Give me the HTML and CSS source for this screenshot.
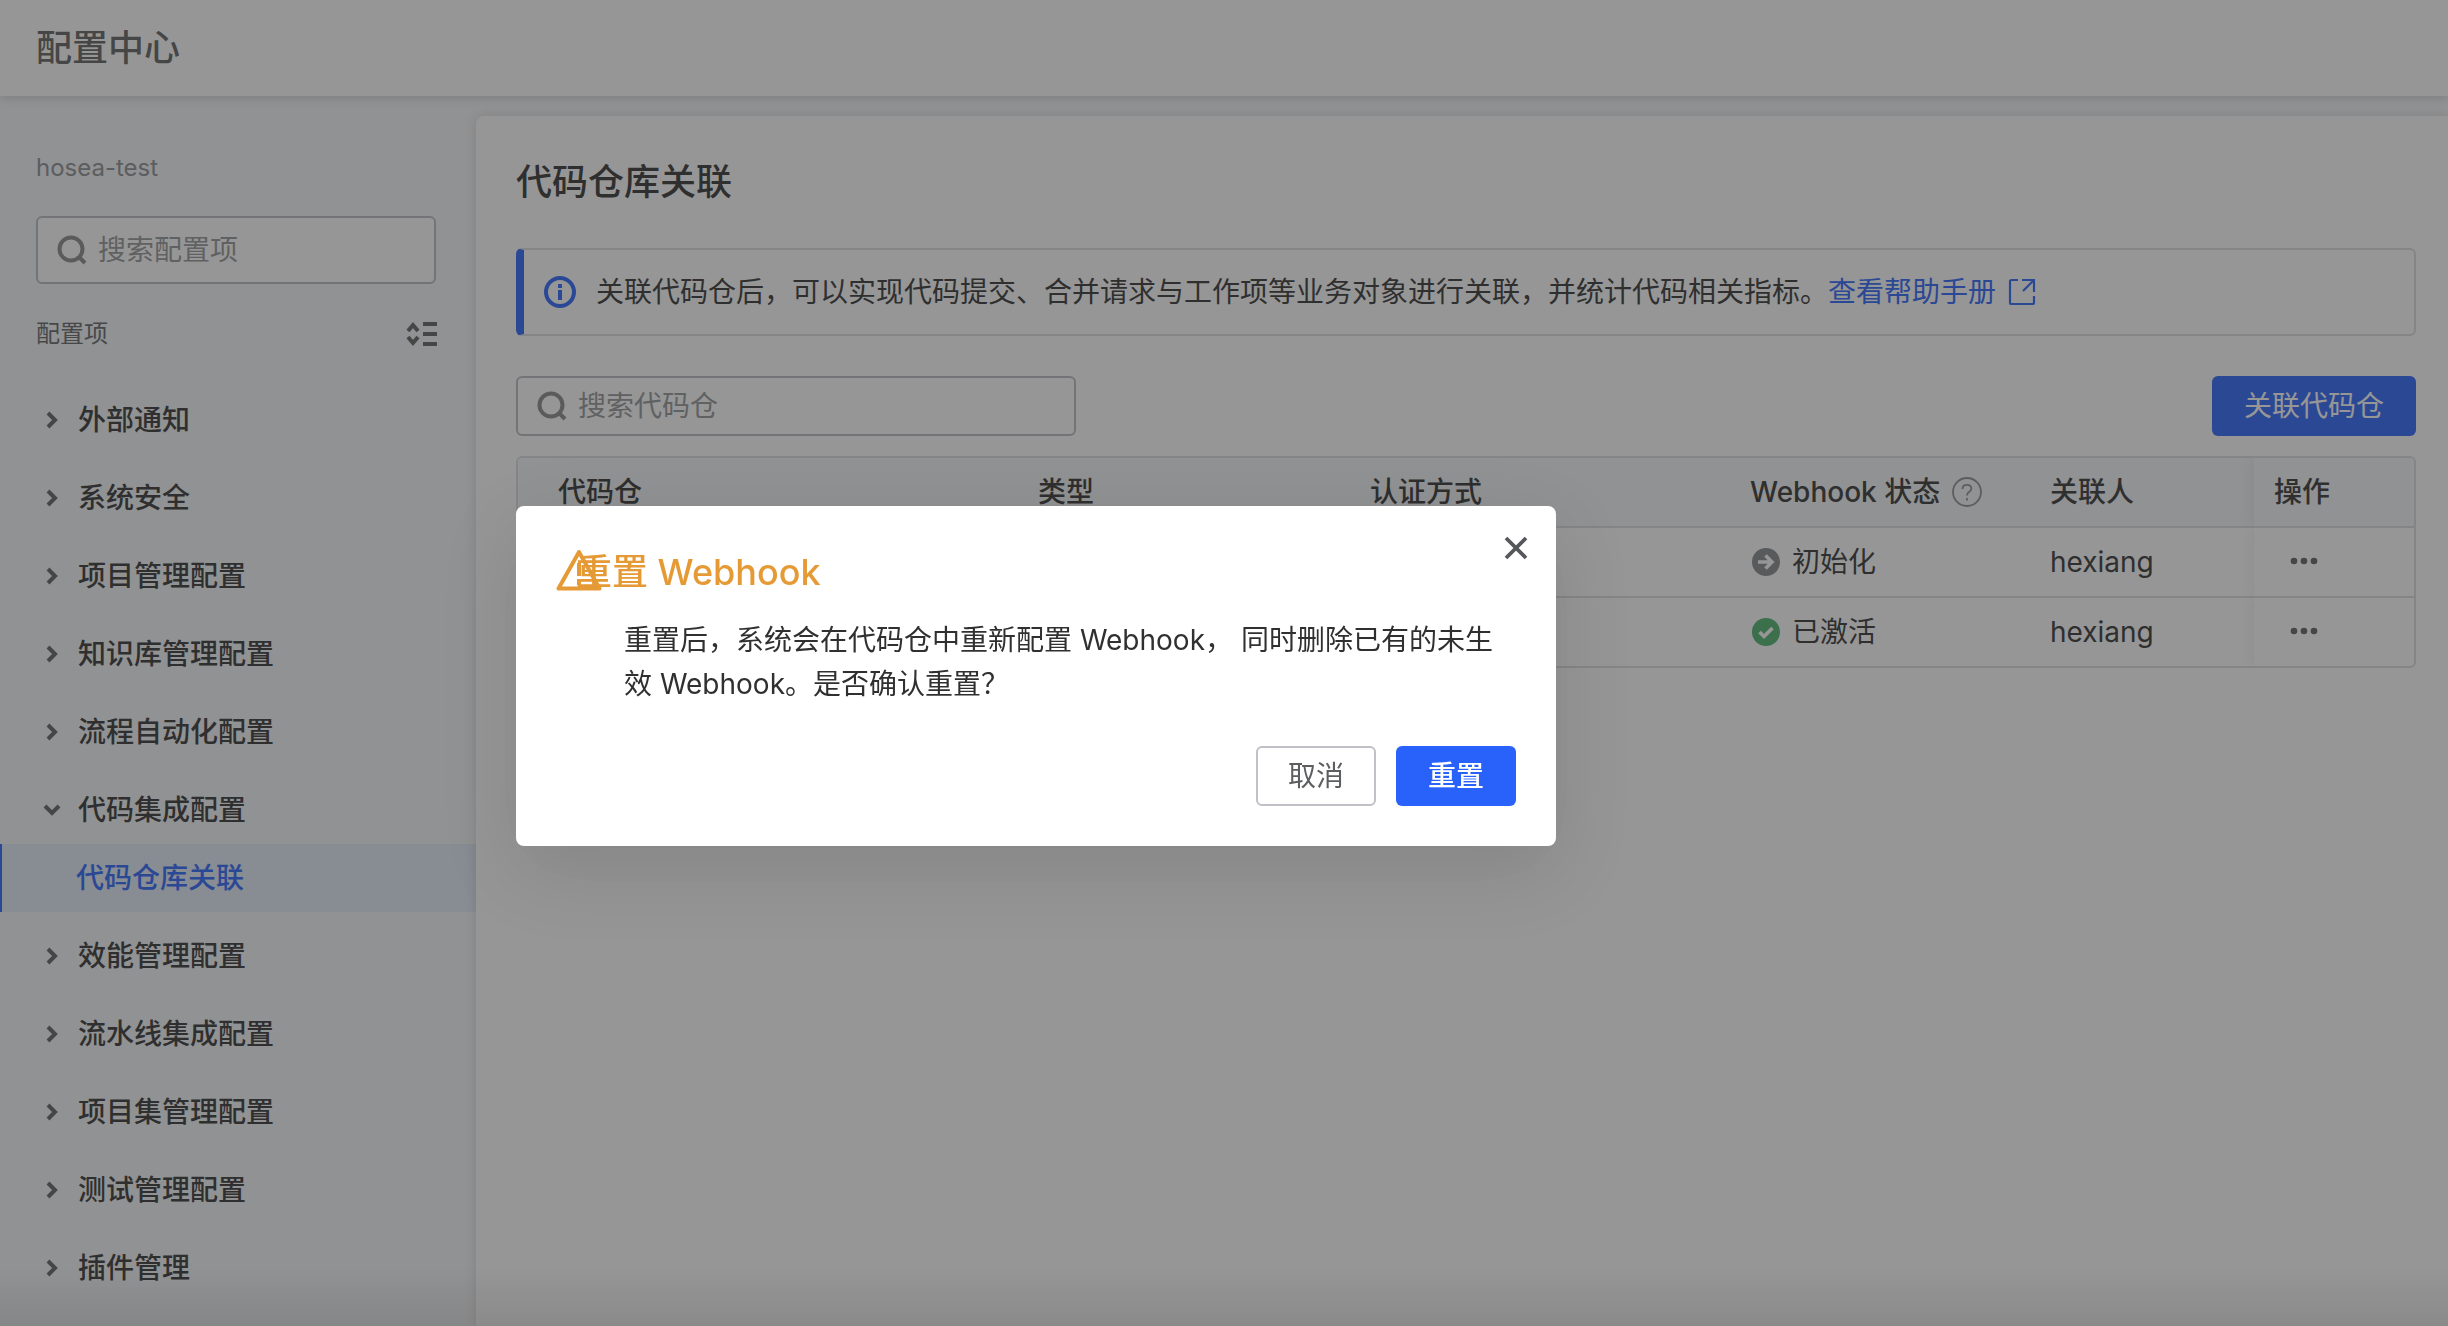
FILE: index.html
```html
<!DOCTYPE html>
<html lang="zh-CN">
<head>
<meta charset="utf-8">
<meta name="viewport" content="width=device-width, initial-scale=1">
<title>配置中心</title>
<link rel="stylesheet" href="styles.css">
</head>
<body>
<svg class="sprite" aria-hidden="true">
  <symbol id="chevron" viewBox="0 0 20 20"><path d="M6 3l7 7-7 7" fill="none" stroke="currentColor" stroke-width="4"/></symbol>
  <symbol id="search" viewBox="0 0 32 32"><circle cx="15" cy="15" r="11.500" fill="none" stroke="currentColor" stroke-width="4"/><path d="M23 23l6 6" stroke="currentColor" stroke-width="4"/></symbol>
  <symbol id="more" viewBox="0 0 28 8"><circle cx="4" cy="4" r="3.300" fill="currentColor"/><circle cx="14" cy="4" r="3.300" fill="currentColor"/><circle cx="24" cy="4" r="3.300" fill="currentColor"/></symbol>
</svg>
<div class="app">
  <header class="topbar"><h1 class="topbar-title">配置中心</h1></header>
  <div class="layout">
    <aside class="sidebar">
      <p class="project">hosea-test</p>
      <label class="search search-side">
        <svg class="search-icon" aria-hidden="true"><use href="#search"/></svg>
        <input class="search-input" type="text" placeholder="搜索配置项" aria-label="搜索配置项">
      </label>
      <div class="group-head">
        <span>配置项</span>
        <button class="icon-button" type="button" aria-label="展开收起">
          <svg class="fold-icon" viewBox="0 0 32 28" aria-hidden="true"><path d="M2 11l5-6 5 6M2 17l5 6 5-6" fill="none" stroke="currentColor" stroke-width="4"/><path d="M17 4h14M17 14h14M17 24h14" stroke="currentColor" stroke-width="4"/></svg>
        </button>
      </div>
      <nav class="menu">
        <a class="menu-item" href="#"><svg class="chevron"><use href="#chevron"/></svg>外部通知</a>
        <a class="menu-item" href="#"><svg class="chevron"><use href="#chevron"/></svg>系统安全</a>
        <a class="menu-item" href="#"><svg class="chevron"><use href="#chevron"/></svg>项目管理配置</a>
        <a class="menu-item" href="#"><svg class="chevron"><use href="#chevron"/></svg>知识库管理配置</a>
        <a class="menu-item" href="#"><svg class="chevron"><use href="#chevron"/></svg>流程自动化配置</a>
        <div class="menu-group">
          <a class="menu-item" href="#"><svg class="chevron chevron-open"><use href="#chevron"/></svg>代码集成配置</a>
          <a class="menu-sub" href="#" aria-current="page">代码仓库关联</a>
        </div>
        <a class="menu-item" href="#"><svg class="chevron"><use href="#chevron"/></svg>效能管理配置</a>
        <a class="menu-item" href="#"><svg class="chevron"><use href="#chevron"/></svg>流水线集成配置</a>
        <a class="menu-item" href="#"><svg class="chevron"><use href="#chevron"/></svg>项目集管理配置</a>
        <a class="menu-item" href="#"><svg class="chevron"><use href="#chevron"/></svg>测试管理配置</a>
        <a class="menu-item" href="#"><svg class="chevron"><use href="#chevron"/></svg>插件管理</a>
      </nav>
    </aside>
    <main class="panel">
      <h2 class="panel-title">代码仓库关联</h2>
      <div class="notice">
        <svg class="notice-icon" viewBox="0 0 32 32" aria-hidden="true"><circle cx="16" cy="16" r="14" fill="none" stroke="currentColor" stroke-width="4"/><path d="M16 8v4M16 14v10" stroke="currentColor" stroke-width="4"/></svg>
        <p class="notice-text">关联代码仓后，可以实现代码提交、合并请求与工作项等业务对象进行关联，并统计代码相关指标。<a class="link" href="#">查看帮助手册<svg class="link-icon" viewBox="0 0 28 28" aria-hidden="true"><path d="M10 2H3.500Q2 2 2 3.500V24.500Q2 26 3.500 26H24.500Q26 26 26 24.500V18M14 2H26V14M26 2L15 13" fill="none" stroke="currentColor" stroke-width="2.200"/></svg></a></p>
      </div>
      <div class="toolbar">
        <label class="search search-main">
          <svg class="search-icon" aria-hidden="true"><use href="#search"/></svg>
          <input class="search-input" type="text" placeholder="搜索代码仓" aria-label="搜索代码仓">
        </label>
        <button class="button button-primary" type="button">关联代码仓</button>
      </div>
      <div class="table-box">
        <table class="table">
          <colgroup><col class="col-repo"><col class="col-type"><col class="col-auth"><col class="col-hook"><col class="col-user"><col class="col-action"></colgroup>
          <thead>
            <tr>
              <th>代码仓</th><th>类型</th><th>认证方式</th>
              <th><span class="cell">Webhook 状态<svg class="help-icon" viewBox="0 0 30 30" aria-hidden="true"><circle cx="15" cy="15" r="14" fill="none" stroke="currentColor" stroke-width="1.800"/><path d="M10.500 12Q10.500 7.800 15 7.800Q19.300 7.800 19.300 11.500Q19.300 13.500 17 15Q15 16.300 15 18.500M15 21v2.600" fill="none" stroke="currentColor" stroke-width="1.800"/></svg></span></th>
              <th>关联人</th><th class="fixed">操作</th>
            </tr>
          </thead>
          <tbody>
            <tr>
              <td></td><td></td><td></td>
              <td><span class="cell status"><svg class="status-icon status-init" viewBox="0 0 28 28" aria-hidden="true"><circle cx="14" cy="14" r="14" fill="currentColor"/><path class="status-mark" d="M6 14h14M13.500 7.500l6.500 6.500-6.500 6.500"/></svg>初始化</span></td>
              <td>hexiang</td>
              <td class="fixed"><button class="more-button" type="button" aria-label="更多操作"><svg class="more-icon"><use href="#more"/></svg></button></td>
            </tr>
            <tr>
              <td></td><td></td><td></td>
              <td><span class="cell status"><svg class="status-icon status-active" viewBox="0 0 28 28" aria-hidden="true"><circle cx="14" cy="14" r="14" fill="currentColor"/><path class="status-mark" d="M7.500 14l4.500 4.500 8.500-8.500"/></svg>已激活</span></td>
              <td>hexiang</td>
              <td class="fixed"><button class="more-button" type="button" aria-label="更多操作"><svg class="more-icon"><use href="#more"/></svg></button></td>
            </tr>
          </tbody>
        </table>
      </div>
    </main>
  </div>
</div>
<div class="mask">
  <section class="modal" role="dialog" aria-modal="true" aria-labelledby="modal-title">
    <button class="modal-close" type="button" aria-label="关闭"><svg class="close-icon" viewBox="0 0 24 24" aria-hidden="true"><path d="M2 2l20 20M22 2L2 22" stroke="currentColor" stroke-width="3.800"/></svg></button>
    <h3 class="modal-title" id="modal-title"><svg class="warn-icon" viewBox="0 0 46 42" aria-hidden="true"><path d="M23 3L2.500 39.500H43.500Z" fill="none" stroke="currentColor" stroke-width="4" stroke-linejoin="round"/><path d="M23 14v13M23 30v6" stroke="currentColor" stroke-width="4"/></svg>重置 Webhook</h3>
    <p class="modal-text">重置后，系统会在代码仓中重新配置 Webhook， 同时删除已有的未生效 Webhook。是否确认重置？</p>
    <div class="modal-foot">
      <button class="button button-plain" type="button">取消</button>
      <button class="button button-primary button-strong" type="button">重置</button>
    </div>
  </section>
</div>
</body>
</html>
```
FILE: styles.css
```css
:root {
  --blue: #2962fb;
  --text: #303030;
  --text-2: #606266;
  --text-3: #8b8d90;
  --line: #dcdde0;
  --line-strong: #b9bbc0;
  --bg: #f5f6f8;
}
* { box-sizing: border-box; }
body {
  margin: 0;
  background: var(--bg);
  color: var(--text);
  font: 400 28px/44px Inter, "Noto Sans CJK SC", sans-serif;
}
h1, h2, h3, p { margin: 0; font-weight: 500; }
a { color: inherit; text-decoration: none; }
button, input { font: inherit; color: inherit; }
.sprite { position: absolute; width: 0; height: 0; }

.app { display: flex; flex-direction: column; min-height: 100vh; }
.topbar {
  z-index: 1;
  padding: 24px 36px;
  background: #fff;
  box-shadow: 0 2px 10px rgba(0, 0, 0, .16);
}
.topbar-title { font-size: 36px; line-height: 48px; color: #5c5e5c; }
.layout { display: flex; flex: 1; padding-top: 20px; }

.sidebar { flex: 0 0 476px; min-width: 0; padding-top: 34px; }
.project {
  padding: 0 36px;
  font-size: 24px;
  line-height: 36px;
  font-weight: 400;
  color: var(--text-3);
}
.search {
  display: flex;
  align-items: center;
  gap: 10px;
  padding: 0 18px;
  border: 2px solid var(--line-strong);
  border-radius: 6px;
  background: #fff;
}
.search-side { height: 68px; margin: 30px 40px 0 36px; }
.search-main { flex: 0 1 560px; height: 60px; }
.search-icon { flex: none; width: 32px; height: 32px; color: #88898a; }
.search-input { flex: 1; min-width: 0; padding: 0; border: 0; outline: 0; background: none; }
.search-input::placeholder { color: #939496; opacity: 1; }
.group-head {
  display: flex;
  align-items: center;
  justify-content: space-between;
  padding: 32px 38px 34px 36px;
  font-size: 24px;
  line-height: 36px;
  color: var(--text-2);
}
.icon-button { display: flex; padding: 0; border: 0; background: none; }
.fold-icon { width: 32px; height: 28px; color: #5c5e5c; }
.menu { display: flex; flex-direction: column; gap: 10px; padding-bottom: 20px; }
.menu-item {
  display: flex;
  align-items: center;
  gap: 16px;
  height: 68px;
  padding-left: 42px;
  font-weight: 500;
}
.chevron { width: 20px; height: 20px; color: #5c5e5c; }
.chevron-open { transform: rotate(90deg); }
.menu-sub {
  display: flex;
  align-items: center;
  height: 68px;
  padding-left: 74px;
  border-left: 2px solid var(--blue);
  background: #e2ebf8;
  color: var(--blue);
  font-weight: 500;
}

.panel {
  flex: 1;
  min-width: 0;
  padding: 42px 32px 40px 40px;
  border-radius: 8px 0 0 0;
  background: #fff;
  box-shadow: 0 0 12px rgba(0, 0, 0, .14);
}
.panel-title { font-size: 36px; line-height: 48px; }
.notice {
  display: flex;
  align-items: center;
  gap: 20px;
  height: 88px;
  margin-top: 42px;
  padding: 0 20px;
  border: 2px solid var(--line);
  border-left: 8px solid var(--blue);
  border-radius: 6px;
}
.notice-icon { flex: none; width: 32px; height: 32px; color: var(--blue); }
.notice-text { font-weight: 400; }
.link { display: inline-flex; align-items: center; gap: 12px; color: var(--blue); }
.link-icon { width: 28px; height: 28px; }
.toolbar { display: flex; justify-content: space-between; margin: 40px 0 20px; }

.button {
  height: 60px;
  padding: 0 32px;
  border: 0;
  border-radius: 6px;
}
.button-primary { background: var(--blue); color: #fff; }
.button-strong { font-weight: 500; }
.button-plain { padding: 0 30px; border: 2px solid #bfc1c6; background: #fff; color: #5c5e60; }

.table-box { overflow: hidden; border: 2px solid var(--line); border-radius: 6px; }
.table { width: 100%; border-collapse: separate; border-spacing: 0; table-layout: fixed; }
.col-type { width: 332px; }
.col-auth { width: 380px; }
.col-hook { width: 300px; }
.col-user { width: 224px; }
.col-action { width: 160px; }
.table th, .table td { height: 70px; padding: 0 20px; text-align: left; border-bottom: 2px solid var(--line); }
.table th { background: var(--bg); font-weight: 500; }
.table th:first-child, .table td:first-child { padding-left: 40px; }
.table tbody tr:last-child td { border-bottom: 0; height: 68px; }
.table .fixed { box-shadow: -4px 0 12px rgba(0, 0, 0, .06); clip-path: inset(0 0 0 -20px); }
.cell { display: flex; align-items: center; gap: 12px; }
.status { padding-left: 2px; }
.help-icon { width: 30px; height: 30px; color: #8c8d90; }
.status-icon { width: 28px; height: 28px; }
.status-init { color: #85878a; }
.status-active { color: #4bb06a; }
.status-mark { fill: none; stroke: #fff; stroke-width: 3.600; }
.more-button { display: flex; padding: 12px 16px 14px; border: 0; background: none; }
.more-icon { width: 28px; height: 8px; color: #5c5e60; }

.mask {
  position: fixed;
  inset: 0;
  z-index: 10;
  padding: 506px 0 0 516px;
  background: linear-gradient(transparent calc(100% - 60px), rgba(0, 0, 0, .08)), rgba(45, 45, 45, .5);
}
.modal {
  position: relative;
  width: 1040px;
  max-width: 100%;
  padding: 42px 40px 40px;
  border-radius: 8px;
  background: #fff;
  box-shadow: 0 24px 80px rgba(0, 0, 0, .12);
}
.modal-close {
  position: absolute;
  top: 30px;
  right: 28px;
  display: flex;
  padding: 0;
  border: 0;
  background: none;
}
.close-icon { width: 24px; height: 24px; color: #55575a; }
.modal-title {
  padding-left: 20px;
  font-size: 36px;
  line-height: 48px;
  color: #e69a36;
}
.warn-icon { position: absolute; top: 43px; left: 40px; width: 46px; height: 42px; }
.modal-text { margin: 22px 20px 0 68px; font-weight: 400; }
.modal-foot { display: flex; justify-content: flex-end; gap: 20px; margin-top: 40px; }
```
